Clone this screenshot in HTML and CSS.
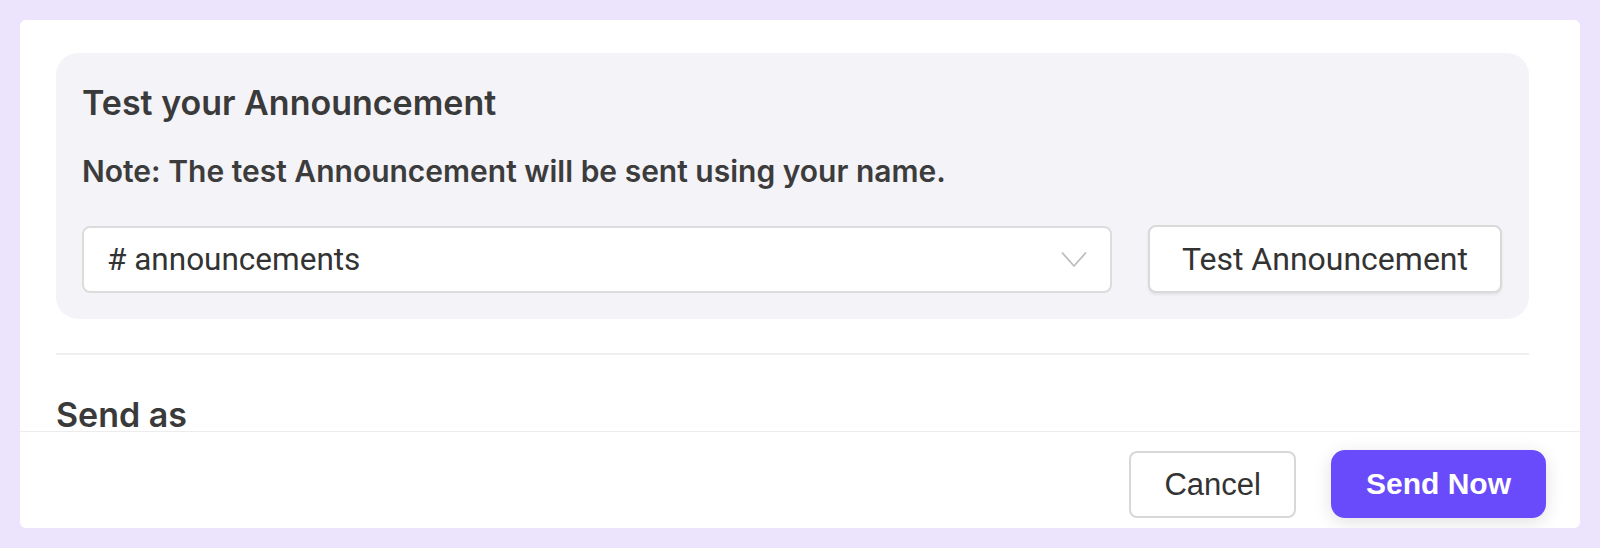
FILE: index.html
```html
<!DOCTYPE html>
<html lang="en">
<head>
<meta charset="utf-8">
<title>Test your Announcement</title>
<link rel="stylesheet" href="styles.css">
</head>
<body>
  <div class="modal">
    <div class="modal-body">
      <section class="test-panel">
        <h2 class="panel-title">Test your Announcement</h2>
        <p class="panel-note">Note: The test Announcement will be sent using your name.</p>
        <div class="test-row">
          <div class="select">
            <span class="select-value"># announcements</span>
            <svg class="chevron" width="26" height="17" viewBox="0 0 26 17" aria-hidden="true">
              <path d="M1 1.5 L13 15 L25 1.5" fill="none" stroke="#bdbdbd" stroke-width="1.8"/>
            </svg>
          </div>
          <button class="btn-test">Test Announcement</button>
        </div>
      </section>
      <hr class="divider">
      <h2 class="section-title">Send as</h2>
    </div>
    <footer class="modal-footer">
      <button class="btn-cancel">Cancel</button>
      <button class="btn-send">Send Now</button>
    </footer>
  </div>
</body>
</html>
```

FILE: styles.css
```css
* { box-sizing: border-box; }

html, body {
  margin: 0;
  padding: 0;
}

body {
  background: #ece4fc;
  padding: 20px;
  height: 548px;
  overflow: hidden;
  font-family: "Inter", "Liberation Sans", sans-serif;
  color: #3a3a3a;
}

.modal {
  width: 1560px;
  height: 508px;
  background: #ffffff;
  border-radius: 6px;
  display: flex;
  flex-direction: column;
  overflow: hidden;
}

.modal-body {
  flex: 1;
  min-height: 0;
  overflow: hidden;
  padding: 33px 51px 0 36px;
}

.test-panel {
  background: #f4f3f8;
  border-radius: 22px;
  padding: 29px 27px 26px 26px;
}

.panel-title {
  margin: 0;
  font-size: 34px;
  line-height: 42px;
  font-weight: 600;
  color: #3a3a3a;
}

.panel-note {
  margin: 29px 0 0;
  font-size: 30px;
  line-height: 36px;
  font-weight: 600;
  color: #3c3c3c;
}

.test-row {
  margin-top: 36px;
  display: flex;
  align-items: center;
  gap: 36px;
}

.select {
  flex: 1;
  height: 67px;
  background: #ffffff;
  border: 2px solid #dcdcdc;
  border-radius: 8px;
  display: flex;
  align-items: center;
  justify-content: space-between;
  padding: 0 23px 0 23px;
}

.select-value {
  font-family: "Roboto", "Liberation Sans", sans-serif;
  font-size: 31.5px;
  color: #333333;
}

.chevron {
  display: block;
}

.btn-test {
  height: 68px;
  background: #ffffff;
  border: 2px solid #d9d9d9;
  border-radius: 8px;
  box-shadow: 0 2px 3px rgba(0, 0, 0, 0.07);
  padding: 0 32px;
  font-family: "Roboto", "Liberation Sans", sans-serif;
  font-size: 32px;
  color: #333333;
}

.divider {
  margin: 34px 0 0;
  border: 0;
  border-top: 2px solid #efefef;
}

.section-title {
  margin: 39px 0 0;
  font-size: 34px;
  line-height: 42px;
  font-weight: 600;
  color: #3a3a3a;
}

.modal-footer {
  flex: 0 0 97px;
  border-top: 1px solid #ececec;
  display: flex;
  justify-content: flex-end;
  align-items: flex-start;
  gap: 35px;
  padding: 19px 34px 0 0;
}

.btn-cancel {
  height: 67px;
  background: #ffffff;
  border: 2px solid #d8d8d8;
  border-radius: 8px;
  padding: 0 33px;
  font-family: "Liberation Sans", Arial, sans-serif;
  font-size: 31px;
  color: #333333;
}

.btn-send {
  height: 68px;
  margin-top: -1px;
  background: #6a4bfb;
  border: 0;
  border-radius: 14px;
  padding: 0 35px;
  font-family: "Liberation Sans", Arial, sans-serif;
  font-size: 30px;
  font-weight: 700;
  color: #ffffff;
  box-shadow: 0 4px 18px rgba(0, 0, 0, 0.12);
}
```
